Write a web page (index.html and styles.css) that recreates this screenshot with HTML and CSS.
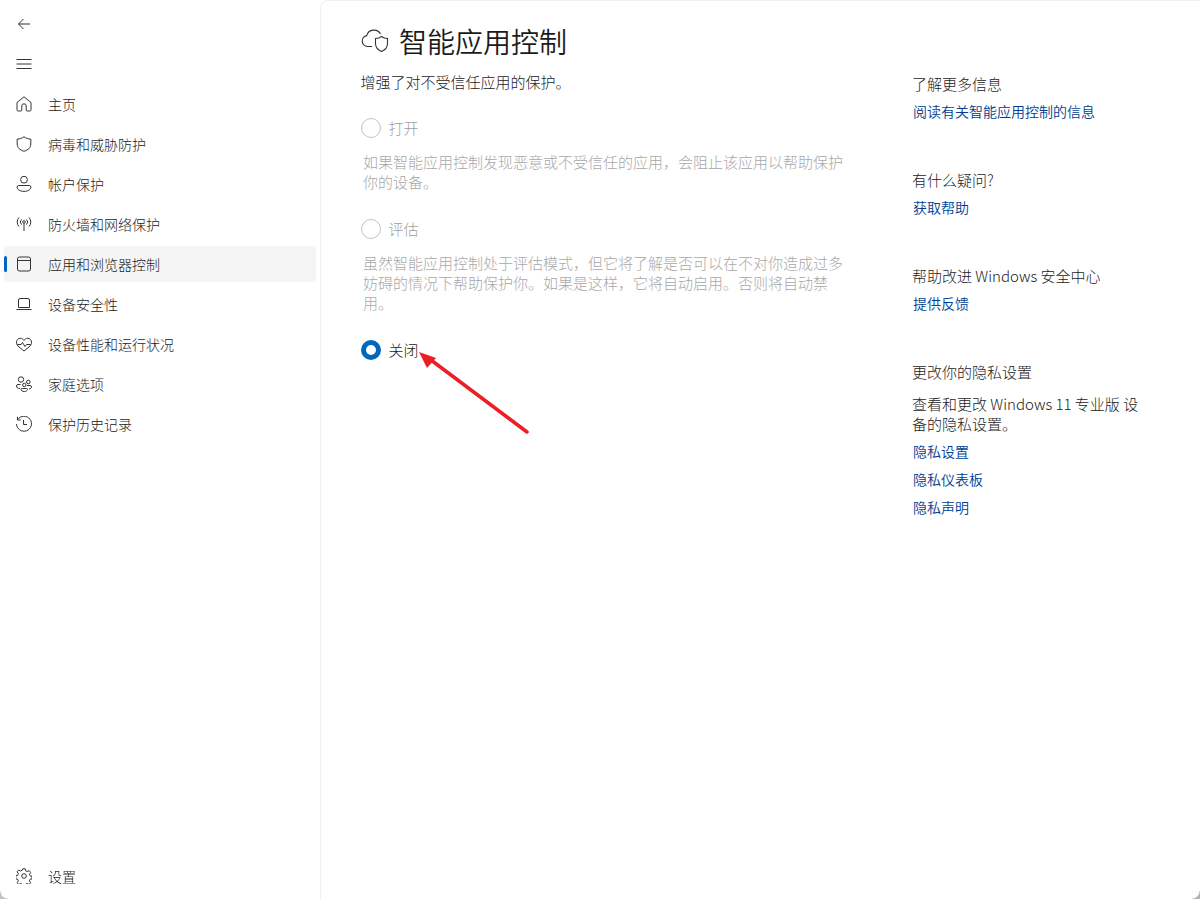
FILE: index.html
```html
<!DOCTYPE html>
<html lang="zh-CN">
<head>
<meta charset="utf-8">
<title>智能应用控制</title>
<link rel="stylesheet" href="styles.css">
</head>
<body>
<div class="app">
  <aside class="sidebar">
    <div class="tool"><svg class="ico" viewBox="0 0 16 16"><path d="M14 8H2.500M7.500 3 2.500 8l5 5"/></svg></div>
    <div class="tool"><svg class="ico" viewBox="0 0 16 16"><path d="M0.500 3.500h15M0.500 8h15M0.500 12.500h15"/></svg></div>
    <nav class="nav">
      <a class="item"><svg class="ico" viewBox="0 0 16 16"><path d="M1 6.500 8 .8l7 5.700v7.300a1.200 1.200 0 0 1-1.200 1.200h-2.600a1 1 0 0 1-1-1V10a2.200 2.200 0 0 0-4.400 0v4a1 1 0 0 1-1 1H2.200A1.200 1.200 0 0 1 1 13.800z"/></svg><span>主页</span></a>
      <a class="item"><svg class="ico" viewBox="0 0 16 16"><path d="M8 .7c2 1.600 4.300 2.400 6.800 2.400v5c0 3.300-2.300 5.700-6.800 7.200C3.500 13.800 1.200 11.400 1.200 8.100v-5C3.700 3.100 6 2.300 8 .7z"/></svg><span>病毒和威胁防护</span></a>
      <a class="item"><svg class="ico" viewBox="0 0 16 16"><circle cx="8" cy="3.700" r="3.400"/><path d="M2.600 9.500h10.800a1.500 1.500 0 0 1 1.500 1.500c0 2.600-2.900 4.400-6.900 4.400S1.100 13.600 1.100 11a1.500 1.500 0 0 1 1.500-1.500z"/></svg><span>帐户保护</span></a>
      <a class="item"><svg class="ico" viewBox="0 0 16 16"><circle cx="8" cy="6" r="1.300"/><path d="M8 7.500V15M5.500 8.500a3.500 3.500 0 0 1 0-5M10.500 3.500a3.500 3.500 0 0 1 0 5M3 10.500a6.500 6.500 0 0 1 0-9M13 1.500a6.500 6.500 0 0 1 0 9"/></svg><span>防火墙和网络保护</span></a>
      <a class="item active"><svg class="ico" viewBox="0 0 16 16"><rect x="1.500" y="1" width="13" height="14" rx="2"/><path d="M1.500 4.500h13"/></svg><span>应用和浏览器控制</span></a>
      <a class="item"><svg class="ico" viewBox="0 0 16 16"><path d="M2.500 11.500V4a1.500 1.500 0 0 1 1.500-1.500h8A1.500 1.500 0 0 1 13.500 4v7.500M.5 13.500h15"/><path d="M2.500 11.500h11"/></svg><span>设备安全性</span></a>
      <a class="item"><svg class="ico" viewBox="0 0 16 16"><path d="M2 10C.8 8.700.5 7.600.5 6.200.5 4 2.200 2.300 4.200 2.300c1.700 0 3 .8 3.800 2.200.8-1.400 2.100-2.200 3.800-2.200 2 0 3.700 1.700 3.700 3.900 0 1.400-.3 2.500-1.500 3.800L8 15z"/><path d="M1.500 8.500h3.700l1.300-2 2.500 4 1.500-2h4"/></svg><span>设备性能和运行状况</span></a>
      <a class="item"><svg class="ico" viewBox="0 0 16 16"><circle cx="5" cy="3.500" r="2.700"/><circle cx="12.300" cy="6" r="1.800"/><circle cx="8.300" cy="9" r="1.700"/><path d="M4.500 8.500H2A1.500 1.500 0 0 0 .5 10c0 1.500 1.200 2.500 3.500 2.500M11 9.500h3a1.500 1.500 0 0 1 1.500 1.500c0 1-.8 1.800-2.500 2M6.500 12.500h4a1 1 0 0 1 1 1c0 1-1.300 2-3.200 2s-3.300-1-3.300-2a1 1 0 0 1 1-1z"/></svg><span>家庭选项</span></a>
      <a class="item"><svg class="ico" viewBox="0 0 16 16"><path d="M1.800 3.500A7.500 7.500 0 1 1 .5 8M1.500 .8v3.200h3.200M7.500 4v4.500h3.500"/></svg><span>保护历史记录</span></a>
    </nav>
    <a class="item settings"><svg class="ico" viewBox="0 0 16 16"><circle cx="8" cy="8" r="2.300"/><path d="M6.800 .8h2.400l.5 2.100 1.500.7 1.900-1 1.600 1.800-1.200 1.800.5 1.600 2 .6v2.400l-2 .6-.5 1.500 1.100 1.800-1.600 1.800-1.900-1-1.500.7-.5 2h-2.400l-.5-2-1.500-.7-1.900 1-1.600-1.800 1.100-1.800-.5-1.500-2-.6V7.800l2-.6.5-1.600L1.100 3.800 2.700 2l1.900 1 1.500-.7z"/></svg><span>设置</span></a>
  </aside>
  <main class="panel">
    <section class="content">
      <h1 class="title"><svg class="title-ico" viewBox="0 0 28 24"><path d="M11 17.500H6.500a5.500 5.500 0 0 1-.8-10.900A7.500 7.500 0 0 1 19.500 5"/><path d="M20.500 7.500c1.700 1.400 3.700 2 6 2v5c0 3.700-2 6.300-6 8-4-1.700-6-4.300-6-8v-5c2.300 0 4.300-.6 6-2z"/></svg><span>智能应用控制</span></h1>
      <p class="lead">增强了对不受信任应用的保护。</p>
      <label class="radio off first"><i class="dot"></i><span>打开</span></label>
      <p class="desc">如果智能应用控制发现恶意或不受信任的应用，会阻止该应用以帮助保护你的设备。</p>
      <label class="radio off"><i class="dot"></i><span>评估</span></label>
      <p class="desc">虽然智能应用控制处于评估模式，但它将了解是否可以在不对你造成过多妨碍的情况下帮助保护你。如果是这样，它将自动启用。否则将自动禁用。</p>
      <label class="radio on"><i class="dot"></i><span>关闭</span></label>
    </section>
    <aside class="links">
      <div class="group">
        <h2>了解更多信息</h2>
        <a class="link">阅读有关智能应用控制的信息</a>
      </div>
      <div class="group">
        <h2>有什么疑问?</h2>
        <a class="link">获取帮助</a>
      </div>
      <div class="group">
        <h2>帮助改进 Windows 安全中心</h2>
        <a class="link">提供反馈</a>
      </div>
      <div class="group">
        <h2>更改你的隐私设置</h2>
        <p>查看和更改 Windows 11 专业版 设备的隐私设置。</p>
        <a class="link">隐私设置</a>
        <a class="link">隐私仪表板</a>
        <a class="link">隐私声明</a>
      </div>
    </aside>
    <svg class="arrow" viewBox="0 0 120 90"><path class="arrow-line" d="M108 81 12 9"/><path class="arrow-head" d="M0 1 17 7 8 17z"/></svg>
  </main>
</div>
</body>
</html>
```
FILE: styles.css
```css
* { box-sizing: border-box; }
html, body { margin: 0; height: 100%; }
body {
  background: #fff;
  color: #1b1b1b;
  font-family: "Noto Sans CJK SC", "Noto Sans", "Liberation Sans", sans-serif;
  font-size: 14px;
  font-weight: 300;
  overflow: hidden;
}
body::before,
body::after {
  content: "";
  position: fixed;
  bottom: 0;
  width: 8px;
  height: 8px;
}
body::before { left: 0; background: radial-gradient(circle at 100% 0, transparent 7px, #c4c4c4 8px); }
body::after { right: 0; background: radial-gradient(circle at 0 0, transparent 7px, #a9b4c0 8px); }
.app { display: flex; height: 899px; }
.sidebar {
  width: 320px;
  flex: none;
  display: flex;
  flex-direction: column;
  padding: 4px 4px 5px;
}
.tool { height: 40px; display: flex; align-items: center; padding-left: 12px; }
.ico {
  width: 16px;
  height: 16px;
  flex: none;
  fill: none;
  stroke: #333;
  stroke-width: 1;
}
.nav { display: flex; flex-direction: column; gap: 4px; flex: 1; padding-top: 2px; }
.item {
  position: relative;
  display: flex;
  align-items: center;
  height: 36px;
  padding-left: 12px;
  border-radius: 4px;
  color: #1b1b1b;
}
.item span { margin-left: 16px; line-height: 20px; }
.item.active { background: #f5f5f5; width: 312px; }
.item.active::before {
  content: "";
  position: absolute;
  left: 0;
  top: 10px;
  width: 3px;
  height: 16px;
  border-radius: 2px;
  background: #0067c0;
}
.panel {
  position: relative;
  flex: 1;
  display: flex;
  border-left: 1px solid #f0f0f0;
  border-top: 1px solid #f0f0f0;
  border-top-left-radius: 8px;
  padding: 0 0 0 40px;
  font-size: 15px;
}
.content { width: 486px; padding-top: 21px; }
.title {
  margin: 0;
  display: flex;
  align-items: center;
  font-size: 28px;
  font-weight: 350;
  line-height: 38px;
  color: #1b1b1b;
}
.title-ico {
  width: 28px;
  height: 24px;
  fill: none;
  stroke: #333;
  stroke-width: 1.1;
  margin-right: 10px;
  overflow: visible;
}
.lead { margin: 12px 0 0 -0.5px; line-height: 20px; height: 20px; }
.radio { display: flex; align-items: center; height: 20px; }
.radio span { margin-top: -2px; }
.radio.first { margin-top: 26px; }
.dot {
  display: block;
  width: 20px;
  height: 20px;
  border-radius: 50%;
  border: 1px solid #c2c2c2;
  margin-right: 7.5px;
}
.off { color: #a0a0a0; }
.on .dot { border: 5.5px solid #0067c0; background: #fff; }
.desc {
  margin: 14px 0 27px 2px;
  width: 484px;
  line-height: 20px;
  color: #a8a8a8;
}
.links { width: 240px; margin-left: 65px; padding-top: 73px; }
.group { margin-bottom: 49px; }
.group h2 {
  margin: 0 0 7px;
  font-size: 15px;
  font-weight: 300;
  line-height: 20px;
  color: #1b1b1b;
}
.group p { margin: 12px 0 7px; line-height: 20px; }
.link { display: block; margin: 0 0 8px 1px; font-size: 14px; font-weight: 350; line-height: 20px; color: #003e92; }
.arrow {
  position: absolute;
  left: 98px;
  top: 350px;
  width: 120px;
  height: 90px;
}
.arrow-line { stroke: #ee1c25; stroke-width: 3.5; stroke-linecap: round; fill: none; }
.arrow-head { fill: #ee1c25; }
```
